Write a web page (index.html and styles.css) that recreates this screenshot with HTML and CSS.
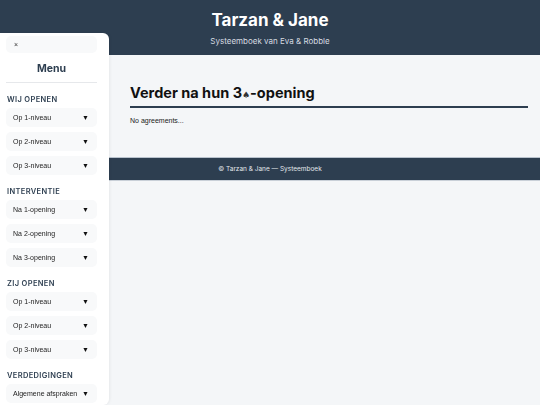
FILE: index.html
```html
<!DOCTYPE html>
<html lang="nl">
<head>
<meta charset="utf-8">
<title>Tarzan &amp; Jane</title>
<link rel="stylesheet" href="styles.css">
</head>
<body>
<header class="site-header">
  <h1 class="site-title">Tarzan &amp; Jane</h1>
  <p class="site-subtitle">Systeemboek van Eva &amp; Robble</p>
</header>

<main class="content">
  <h2 class="page-title">Verder na hun 3<span class="suit">♠</span>-opening</h2>
  <p class="page-text">No agreements...</p>
</main>

<footer class="site-footer">© Tarzan &amp; Jane — Systeemboek</footer>

<nav class="sidebar">
  <button class="close-btn">×</button>
  <div class="menu-title">Menu</div>
  <div class="section">
    <div class="section-title">Wij openen</div>
    <div class="item"><span>Op 1-niveau</span><span class="caret">▼</span></div>
    <div class="item"><span>Op 2-niveau</span><span class="caret">▼</span></div>
    <div class="item"><span>Op 3-niveau</span><span class="caret">▼</span></div>
  </div>
  <div class="section">
    <div class="section-title">Interventie</div>
    <div class="item"><span>Na 1-opening</span><span class="caret">▼</span></div>
    <div class="item"><span>Na 2-opening</span><span class="caret">▼</span></div>
    <div class="item"><span>Na 3-opening</span><span class="caret">▼</span></div>
  </div>
  <div class="section">
    <div class="section-title">Zij openen</div>
    <div class="item"><span>Op 1-niveau</span><span class="caret">▼</span></div>
    <div class="item"><span>Op 2-niveau</span><span class="caret">▼</span></div>
    <div class="item"><span>Op 3-niveau</span><span class="caret">▼</span></div>
  </div>
  <div class="section">
    <div class="section-title">Verdedigingen</div>
    <div class="item"><span>Algemene afspraken</span><span class="caret">▼</span></div>
  </div>
</nav>
</body>
</html>
```

FILE: styles.css
```css
* { box-sizing: border-box; }

html, body {
  margin: 0;
  padding: 0;
}

body {
  background: #f4f6f8;
  font-family: Inter, "Liberation Sans", sans-serif;
  color: #1a1a1a;
  min-height: 405px;
}

.site-header {
  background: #2d3e50;
  height: 55px;
  text-align: center;
  padding-top: 10px;
}

.site-title {
  margin: 0;
  color: #ffffff;
  font-size: 17px;
  line-height: 21px;
  font-weight: 700;
}

.site-subtitle {
  margin: 5px 0 0;
  color: #d5dbe1;
  font-size: 8px;
  line-height: 11px;
}

.content {
  margin-left: 110px;
  padding: 28px 12px 32px 20px;
}

.page-title {
  margin: 0;
  height: 25px;
  font-size: 14.5px;
  line-height: 20px;
  font-weight: 700;
  color: #111111;
  padding-bottom: 3px;
  border-bottom: 2px solid #2d3e50;
}

.suit {
  font-size: 0.62em;
  line-height: 0;
  font-family: "DejaVu Sans", sans-serif;
  color: #333333;
}

.page-text {
  margin: 8px 0 0;
  font-family: "Liberation Sans", Arial, sans-serif;
  font-size: 7px;
  line-height: 9px;
  color: #222222;
}

.site-footer {
  background: #2d3e50;
  height: 24px;
  line-height: 22px;
  border-top: 1px solid #b9c3ce;
  border-bottom: 1px solid #c9d0d8;
  color: #e4e8ec;
  font-size: 6.5px;
  text-align: center;
}

.sidebar {
  position: fixed;
  left: 0;
  top: 33px;
  bottom: 0;
  width: 109px;
  background: #ffffff;
  border-radius: 0 6px 6px 0;
  box-shadow: 1px 0 3px rgba(0, 0, 0, 0.06);
  padding: 3px 12px 0 6px;
  overflow: hidden;
}

.close-btn {
  display: block;
  width: 100%;
  height: 17px;
  border: none;
  background: #f8f9fa;
  border-radius: 5px;
  text-align: left;
  padding: 0 0 0 8px;
  font-family: "Liberation Sans", Arial, sans-serif;
  font-size: 7px;
  color: #333333;
}

.menu-title {
  margin-top: 9px;
  padding-bottom: 6px;
  border-bottom: 1px solid #e6e8eb;
  text-align: center;
  font-size: 10.5px;
  line-height: 14px;
  font-weight: 700;
  color: #2d3e50;
}

.section-title {
  margin: 12px 0 3px 1px;
  font-size: 7.5px;
  line-height: 10px;
  font-weight: 600;
  letter-spacing: 0.35px;
  text-transform: uppercase;
  color: #2d3e50;
}

.section:first-of-type .section-title {
  margin-top: 7px;
}

.item {
  display: flex;
  align-items: center;
  justify-content: space-between;
  height: 19px;
  margin-bottom: 5px;
  padding: 0 8px 0 7px;
  background: #f8f9fa;
  border-radius: 5px;
  font-family: "Liberation Sans", Arial, sans-serif;
  font-size: 7px;
  color: #222222;
}

.caret {
  font-size: 7px;
  color: #111111;
}
```
